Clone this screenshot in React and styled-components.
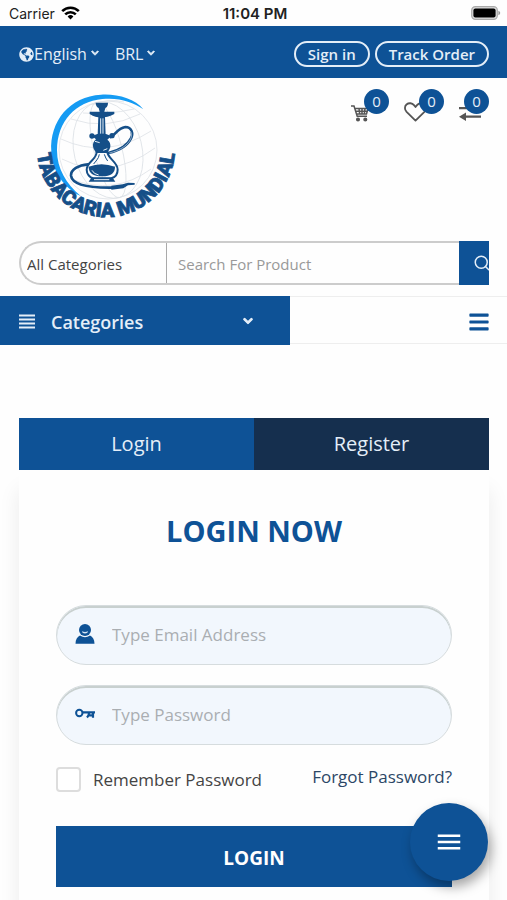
import { useState } from "react";
import styled, { createGlobalStyle, css } from "styled-components";
import { FaBars, FaChevronDown, FaGlobeAmericas } from "react-icons/fa";
import { FiSearch } from "react-icons/fi";
import { MdMenu } from "react-icons/md";

const blue = "#0e5296";
const navy = "#152f4e";

const GlobalStyle = createGlobalStyle`
  * {
    box-sizing: border-box;
  }
  body {
    margin: 0;
    background: #fefefe;
    color: #444;
    font-family: "Open Sans", sans-serif;
    font-size: 16px;
  }
  button, input, select {
    font-family: inherit;
  }
  a {
    color: inherit;
    text-decoration: none;
  }
`;

function Wifi() {
  return (
    <svg width="19" height="14" viewBox="0 0 19 14" fill="none" stroke="#000" strokeWidth="2.6" aria-hidden="true">
      <path d="M1.2 5.2a11.8 11.8 0 0 1 16.6 0" />
      <path d="M4.2 8.4a7.5 7.5 0 0 1 10.6 0" />
      <path d="M9.5 13.4 6.6 10.5a4.1 4.1 0 0 1 5.8 0z" fill="#000" stroke="none" />
    </svg>
  );
}

function Battery() {
  return (
    <svg width="30" height="14" viewBox="0 0 30 14" aria-hidden="true">
      <rect x="0.7" y="0.7" width="25.6" height="12.6" rx="3.6" fill="#ddd" stroke="#aaa" strokeWidth="1.2" />
      <rect x="2.4" y="2.4" width="22.2" height="9.2" rx="2" fill="#000" />
      <path d="M27.4 4.8c2.4.8 2.4 3.6 0 4.4z" fill="#999" />
    </svg>
  );
}

function Cart() {
  return (
    <svg width="18" height="18" viewBox="0 0 18 18" fill="none" stroke="#555" strokeWidth="1.5" aria-hidden="true">
      <path d="M0 2h3l3.200 10.300H16M3.800 4.500H17l-1.500 5.500H5.500M4.500 7.200h12M8 4.500l.7 5.500M11 4.500V10M14 4.500 13.300 10" />
      <circle cx="7" cy="15.500" r="1.300" fill="#555" />
      <circle cx="14.300" cy="15.500" r="1.300" fill="#555" />
    </svg>
  );
}

function Heart() {
  return (
    <svg width="23" height="20" viewBox="0 0 23 20" fill="none" stroke="#555" strokeWidth="1.8" strokeLinejoin="round" aria-hidden="true">
      <path d="M11.5 18.6 2.6 9.9C.3 7.5.5 4.3 2.5 2.5c2.4-2 5.700-1.500 7.500.6l1.500 1.900 1.500-1.900c1.800-2.100 5.100-2.600 7.500-.6 2 1.800 2.200 5-.1 7.400z" />
    </svg>
  );
}

function Swap() {
  return (
    <svg width="23" height="16" viewBox="0 0 23 16" fill="#555" aria-hidden="true">
      <path d="M0 1h16v2.200H0zM22 9.600H7V6.500L0 10.800l7 4.200v-3.200h15z" />
    </svg>
  );
}

function Lines() {
  return (
    <svg width="16" height="15" viewBox="0 0 16 15" stroke="currentColor" strokeWidth="2" aria-hidden="true">
      <path d="M0 1.500h16M0 5.500h16M0 9.500h16M0 13.500h16" />
    </svg>
  );
}

function UserIcon() {
  return (
    <svg width="19" height="20" viewBox="0 0 19 20" fill={blue} aria-hidden="true">
      <circle cx="9.5" cy="6" r="6" />
      <path d="M6.5 7.200q3 1.500 6 0c-.2 3-5.800 3-6 0z" fill="#d5e5f5" />
      <path d="M4.500 11.500q5 3.600 10 0c2.700 1.100 4.500 4 4.500 8.200H0c0-4.200 1.800-7.100 4.500-8.200z" />
    </svg>
  );
}

function KeyIcon() {
  return (
    <svg width="20" height="12" viewBox="0 0 20 12" fill="none" stroke={blue} aria-hidden="true">
      <circle cx="4.300" cy="5" r="3.200" strokeWidth="2" />
      <path d="M8 4.300h12M18 4v5.800M14 5c0 2-.8 3.200-2 4.500M13 7.300h4" strokeWidth="2.200" />
    </svg>
  );
}

function Logo() {
  return (
    <svg width="146" height="134" viewBox="0 0 146 134" overflow="visible" role="img" aria-label="Tabacaria Mundial">
      {/* globe */}
      <g fill="none" stroke="#dde1e6" strokeWidth="0.8">
        <circle cx="76" cy="61" r="49" />
        <ellipse cx="76" cy="61" rx="34" ry="49" transform="rotate(-14 76 61)" />
        <ellipse cx="76" cy="61" rx="14" ry="49" transform="rotate(-14 76 61)" />
        <path d="M39 30q35 12 69-5M29 50q45 21 90-8M30 70q46 23 93-11M39 90q43 17 80-10" />
        <path d="M60 16q16-7 32-3M51 24q24 2 51-4" />
      </g>
      <g transform="translate(-12 -4) scale(.3333)">
        <path d="M370 73C345 40 290 26 243 29 150 34 88 108 94 200c4 62 38 108 88 133-44-37-71-82-71-137 0-88 56-146 136-154 50-5 91 8 123 31z" fill="#159bf3" />
        {/* hose */}
        <g fill="none" stroke="#154f88" strokeWidth="8" strokeLinecap="round">
          <path d="M272 156c14-6 20-26 44-30 20 0 24 20 17 34-12 24-42 38-68 44" />
          <path d="M204 238c-28 2-52 16-51 34 3 26 50 37 124 36" />
        </g>
        <path d="M268 204c26-6 53-19 64-42 5-12 4-27-12-27-20 3-28 20-46 28" fill="none" stroke="#fff" strokeWidth="1.500" />
        <path d="M274 302l34-4 16-5 20 1v5l-20 2-14 9-36 4z" fill="#154f88" />
        {/* pipe */}
        <g fill="#154f88">
          <path d="M227 53h37c0 8-2 13-8 16l-3 11h30v7c-16 8-26 10-39 10s-22-2-35-10v-7h30l-3-11c-6-3-9-8-9-16z" />
          <path d="M235 96h20l2 54h-24z" />
          <circle cx="216" cy="153" r="8" />
          <circle cx="276" cy="152" r="8" />
          <path d="M216 153l16-6h26l16 6-12 11c8 6 10 13 9 22-2 8-6 12-9 18h-34c-3-7-8-11-9-20s2-15 9-21z" />
          <path d="M206 245q38-15 79 0c0 19-12 29-39 29s-40-10-40-29z" />
          <path d="M214 278h64l8 12h-80z" />
        </g>
        <path d="M230 200c1 24-30 30-30 54 0 14 10 24 20 26h54c10-3 19-12 19-26 0-24-30-32-31-54" fill="none" stroke="#154f88" strokeWidth="6" />
        <path d="M242 100v46M249 100v46M225 169l14 4M250 196l12-5M216 256q5 11 20 14M222 284h46" stroke="#e9f2f9" strokeWidth="3" fill="none" />
        <path d="M238 208c-2 14-11 20-17 29M253 208q4 12 10 20" stroke="#154f88" strokeWidth="3" fill="none" />
      </g>
      <path id="logo-arc" d="M5 59A69 69 0 0 0 143 59" fill="none" />
      <text fill="#154f88" stroke="#154f88" strokeWidth="0.8" fontFamily="Roboto, sans-serif" fontWeight="900" fontSize="20">
        <textPath href="#logo-arc" startOffset="50%" textAnchor="middle">
          TABACARIA MUNDIAL
        </textPath>
      </text>
    </svg>
  );
}

function App() {
  const [tab, setTab] = useState("login");

  return (
    <>
      <GlobalStyle />
      <StatusBar>
        <Carrier>
          Carrier <Wifi />
        </Carrier>
        <Clock>11:04 PM</Clock>
        <Battery />
      </StatusBar>
      <TopBar>
        <Pickers>
          <PickerButton type="button">
            <FaGlobeAmericas size={15} />
            English
            <Chevron size={8} />
          </PickerButton>
          <PickerButton type="button">
            BRL
            <Chevron size={8} />
          </PickerButton>
        </Pickers>
        <TopLinks>
          <PillLink href="#signin">Sign in</PillLink>
          <PillLink href="#track">Track Order</PillLink>
        </TopLinks>
      </TopBar>
      <Header>
        <LogoLink href="#home">
          <Logo />
        </LogoLink>
        <Shortcuts>
          <Shortcut href="#cart" aria-label="Cart" $width={38}>
            <Cart />
            <Badge>0</Badge>
          </Shortcut>
          <Shortcut href="#wishlist" aria-label="Wishlist" $width={40}>
            <Heart />
            <Badge>0</Badge>
          </Shortcut>
          <Shortcut href="#compare" aria-label="Compare" $width={30}>
            <Swap />
            <Badge>0</Badge>
          </Shortcut>
        </Shortcuts>
      </Header>
      <SearchForm role="search" onSubmit={(event) => event.preventDefault()}>
        <CategorySelect aria-label="Category">
          <option>All Categories</option>
        </CategorySelect>
        <SearchInput type="search" aria-label="Search" placeholder="Search For Product" />
        <SearchButton aria-label="Search">
          <FiSearch size={18} />
        </SearchButton>
      </SearchForm>
      <NavRow>
        <CategoriesButton type="button">
          <Lines />
          <span>Categories</span>
          <Chevron size={10} />
        </CategoriesButton>
        <MenuButton type="button" aria-label="Menu">
          <FaBars size={22} />
        </MenuButton>
      </NavRow>
      <Main>
        <Tabs>
          <Tab type="button" onClick={() => setTab("login")} aria-pressed={tab === "login"} $active={tab === "login"}>
            Login
          </Tab>
          <Tab type="button" onClick={() => setTab("register")} aria-pressed={tab === "register"} $active={tab === "register"}>
            Register
          </Tab>
        </Tabs>
        <Card onSubmit={(event) => event.preventDefault()}>
          <Title>LOGIN NOW</Title>
          <Field>
            <UserIcon />
            <FieldInput type="email" aria-label="Email address" placeholder="Type Email Address" />
          </Field>
          <Field>
            <KeyIcon />
            <FieldInput type="password" aria-label="Password" placeholder="Type Password" />
          </Field>
          <Options>
            <Remember>
              <Checkbox type="checkbox" />
              Remember Password
            </Remember>
            <ForgotLink href="#forgot">Forgot Password?</ForgotLink>
          </Options>
          <LoginButton>LOGIN</LoginButton>
        </Card>
      </Main>
      <FloatingButton type="button" aria-label="Open menu">
        <MdMenu size={30} />
      </FloatingButton>
    </>
  );
}

export default App;

const plainButton = css`
  border: none;
  padding: 0;
  background: none;
  cursor: pointer;
`;

const StatusBar = styled.div`
  display: grid;
  grid-template-columns: 1fr auto 1fr;
  align-items: center;
  height: 26px;
  padding: 0 6px 0 9px;
  color: #222;
  font-family: Inter, sans-serif;
  font-size: 14px;
  > svg {
    justify-self: end;
  }
`;

const Carrier = styled.span`
  display: flex;
  align-items: center;
  gap: 6px;
`;

const Clock = styled.span`
  font-size: 15px;
  font-weight: 600;
`;

const TopBar = styled.div`
  display: flex;
  justify-content: space-between;
  align-items: center;
  height: 52px;
  padding: 4px 18px 0 19px;
  background: ${blue};
  color: #e4eef8;
`;

const Pickers = styled.div`
  display: flex;
  gap: 16px;
`;

const PickerButton = styled.button`
  ${plainButton}
  display: flex;
  align-items: center;
  color: inherit;
  font-size: 16px;
  line-height: 24px;
`;

const Chevron = styled(FaChevronDown)`
  margin-left: 4px;
  margin-bottom: 2px;
  overflow: visible;
  stroke: currentColor;
  stroke-width: 60;
`;

const TopLinks = styled.div`
  display: flex;
  gap: 5px;
`;

const PillLink = styled.a`
  border: 2px solid #e4eef8;
  border-radius: 14px;
  padding: 0 12px;
  font-size: 15px;
  font-weight: 600;
  line-height: 22px;
`;

const Header = styled.header`
  display: flex;
  justify-content: space-between;
  align-items: flex-start;
  padding: 11px 18px 0 32px;
`;

const LogoLink = styled.a`
  svg {
    display: block;
  }
`;

const Shortcuts = styled.div`
  display: flex;
  gap: 15px;
`;

const Shortcut = styled.a`
  display: flex;
  align-items: flex-end;
  position: relative;
  width: ${({ $width }) => $width}px;
  height: 33px;
  color: #444;
`;

const Badge = styled.span`
  position: absolute;
  top: 0;
  right: 0;
  width: 25px;
  border-radius: 50%;
  background: ${blue};
  color: #e4eef8;
  font-size: 15px;
  line-height: 25px;
  text-align: center;
`;

const SearchForm = styled.form`
  display: flex;
  height: 44px;
  margin: 18px 18px 0 19px;
  border: 2px solid #ccc;
  border-right: none;
  border-radius: 22px 0 0 22px;
`;

const CategorySelect = styled.select`
  width: 146px;
  border: none;
  border-right: 1px solid #aaa;
  padding: 2px 6px 0;
  background: none;
  appearance: none;
  color: #444;
  font-size: 15px;
`;

const SearchInput = styled.input`
  flex: 1;
  min-width: 0;
  border: none;
  padding: 2px 11px 0;
  background: none;
  font-size: 15px;
  &::placeholder {
    color: #999;
  }
`;

const SearchButton = styled.button`
  ${plainButton}
  display: flex;
  align-items: center;
  width: 30px;
  margin: -2px 0;
  padding-left: 14px;
  overflow: hidden;
  background: ${blue};
  color: #e4eef8;
  svg {
    flex-shrink: 0;
  }
`;

const NavRow = styled.nav`
  display: flex;
  justify-content: space-between;
  height: 48px;
  margin-top: 11px;
  border-top: 1px solid #eee;
  border-bottom: 1px solid #eee;
  padding-right: 17px;
`;

const CategoriesButton = styled.button`
  ${plainButton}
  display: flex;
  align-items: center;
  gap: 16px;
  width: 290px;
  margin: -1px 0 -2px;
  padding: 2px 37px 0 19px;
  background: ${blue};
  color: #e4eef8;
  font-size: 18px;
  font-weight: 600;
  text-align: left;
  span {
    flex: 1;
  }
`;

const MenuButton = styled.button`
  ${plainButton}
  display: flex;
  align-items: center;
  padding-top: 4px;
  color: ${blue};
`;

const Main = styled.main`
  padding: 74px 18px 0 19px;
`;

const Tabs = styled.div`
  display: flex;
`;

const Tab = styled.button`
  ${plainButton}
  flex: 1;
  background: ${({ $active }) => ($active ? blue : navy)};
  color: #e4eef8;
  font-size: 20px;
  line-height: 52px;
`;

const Card = styled.form`
  padding: 40px 37px;
  background: #fefefe;
  box-shadow: 0 20px 20px rgba(0, 0, 0, 0.08);
`;

const Title = styled.h1`
  margin: 0 0 53px;
  color: ${blue};
  font-size: 29px;
  font-weight: 700;
  line-height: 42px;
  text-align: center;
`;

const Field = styled.div`
  display: flex;
  align-items: center;
  height: 60px;
  margin-bottom: 20px;
  padding: 0 18px 2px;
  border: 1px solid #d6dcde;
  border-radius: 30px;
  background: #f2f7fd;
  box-shadow: inset 0 2px 0 #c8d0cf;
  svg {
    flex-shrink: 0;
    width: 20px;
  }
`;

const FieldInput = styled.input`
  flex: 1;
  min-width: 0;
  border: none;
  padding: 0 17px;
  background: none;
  font-size: 17px;
  &::placeholder {
    color: #aaaeb2;
  }
`;

const Options = styled.div`
  display: flex;
  justify-content: space-between;
  align-items: flex-start;
  margin-bottom: 34px;
  font-size: 17px;
  line-height: 24px;
`;

const Remember = styled.label`
  display: flex;
  align-items: center;
  gap: 12px;
  padding-top: 2px;
  color: #444;
`;

const Checkbox = styled.input`
  width: 25px;
  height: 25px;
  margin: 0;
  border: 2px solid #ddd;
  border-radius: 4px;
  background: #fff;
  appearance: none;
  &:checked {
    background: ${blue};
  }
`;

const ForgotLink = styled.a`
  color: #2c4766;
`;

const LoginButton = styled.button`
  ${plainButton}
  width: 100%;
  height: 61px;
  padding-top: 2px;
  background: ${blue};
  color: #fff;
  font-size: 19px;
  font-weight: 700;
`;

const FloatingButton = styled.button`
  ${plainButton}
  display: flex;
  justify-content: center;
  align-items: center;
  position: fixed;
  right: 19px;
  bottom: 19px;
  width: 78px;
  height: 78px;
  border-radius: 50%;
  background: ${blue};
  box-shadow: 3px 6px 12px rgba(0, 0, 0, 0.35);
  color: #fff;
`;
